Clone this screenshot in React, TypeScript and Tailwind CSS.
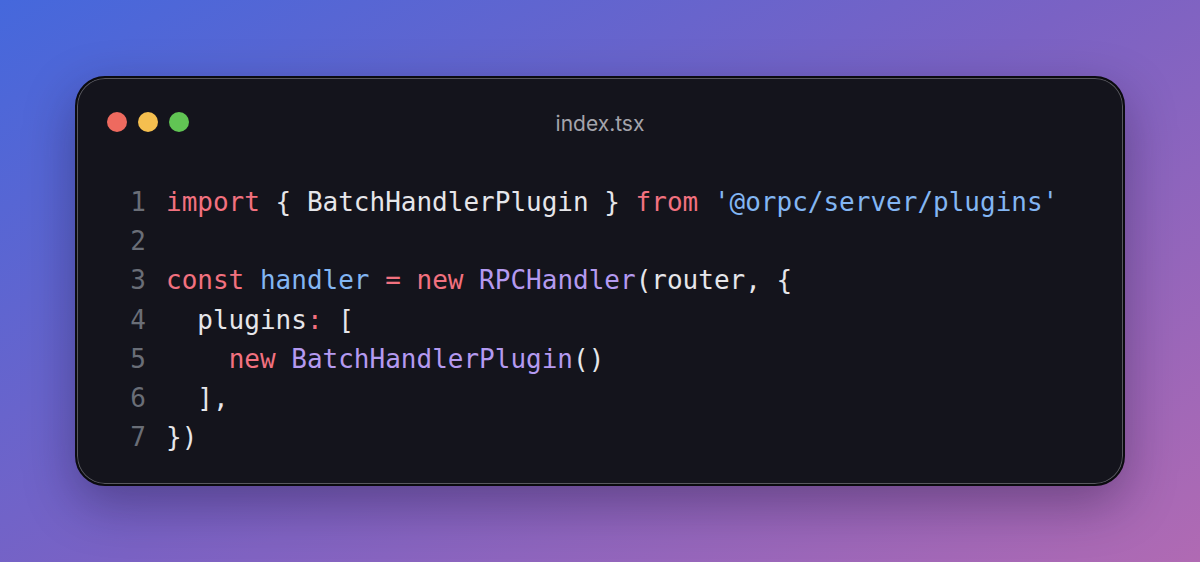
import React from "react";

type Tok = { t: string; c: string };

const R = "text-[#f2717f]";
const B = "text-[#83b6f3]";
const P = "text-[#b49af0]";
const W = "text-[#e6e6ea]";

const lines: Tok[][] = [
  [
    { t: "import", c: R },
    { t: " { BatchHandlerPlugin } ", c: W },
    { t: "from", c: R },
    { t: " ", c: W },
    { t: "'@orpc/server/plugins'", c: B },
  ],
  [],
  [
    { t: "const", c: R },
    { t: " ", c: W },
    { t: "handler", c: B },
    { t: " ", c: W },
    { t: "=", c: R },
    { t: " ", c: W },
    { t: "new", c: R },
    { t: " ", c: W },
    { t: "RPCHandler", c: P },
    { t: "(router, {", c: W },
  ],
  [
    { t: "  plugins", c: W },
    { t: ":", c: R },
    { t: " [", c: W },
  ],
  [
    { t: "    ", c: W },
    { t: "new", c: R },
    { t: " ", c: W },
    { t: "BatchHandlerPlugin", c: P },
    { t: "()", c: W },
  ],
  [{ t: "  ],", c: W }],
  [{ t: "})", c: W }],
];

export default function App() {
  return (
    <div className="w-[1200px] h-[562px] overflow-hidden bg-[linear-gradient(150deg,#4568dc_0%,#7a62c4_50%,#b06ab3_100%)] pl-[75px] pt-[76px]">
      <div className="w-[1050px] h-[410px] rounded-[30px] border-2 border-[#0b0b0f] bg-[#14141c] shadow-[inset_0_0_0_1px_#58585f,0_18px_50px_rgba(20,10,40,0.35)] flex flex-col">
        <div className="mt-[31px] h-[20px] grid grid-cols-[1fr_auto_1fr] items-center">
          <div className="flex items-center gap-[11px] pl-[30px]">
            <div className="w-[20px] h-[20px] rounded-full bg-[#ee6a5f]" />
            <div className="w-[20px] h-[20px] rounded-full bg-[#f5bf4f]" />
            <div className="w-[20px] h-[20px] rounded-full bg-[#61c554]" />
          </div>
          <div className="pt-[5px] text-[21px] leading-[20px] text-[#a4a4ac] font-['Inter','Noto_Sans',sans-serif]">
            index.tsx
          </div>
          <div />
        </div>
        <div className="mt-[54px] pl-[53px] font-['DejaVu_Sans_Mono','Liberation_Mono',monospace] text-[26px] leading-[39.2px] whitespace-pre">
          {lines.map((toks, i) => (
            <div key={i} className="flex">
              <span className="w-[16px] mr-[20px] text-right text-[#6a6e77]">{i + 1}</span>
              <span>
                {toks.map((tk, j) => (
                  <span key={j} className={tk.c}>
                    {tk.t}
                  </span>
                ))}
              </span>
            </div>
          ))}
        </div>
      </div>
    </div>
  );
}
